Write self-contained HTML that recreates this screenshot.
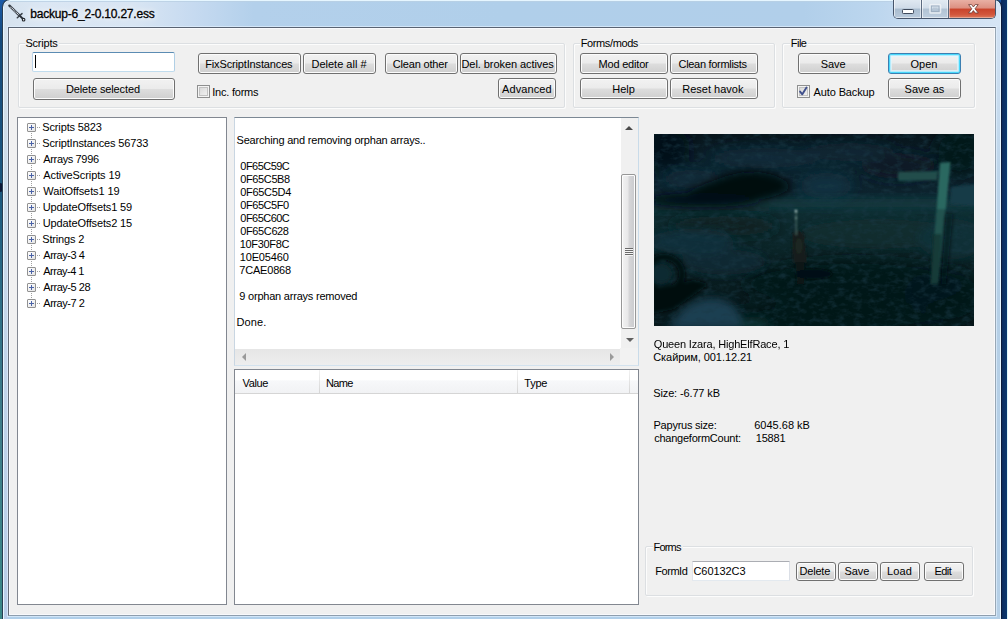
<!DOCTYPE html>
<html>
<head>
<meta charset="utf-8">
<title>backup-6_2-0.10.27.ess</title>
<style>
*{box-sizing:border-box;margin:0;padding:0}
html,body{width:1008px;height:619px;overflow:hidden;background:#0a3a78}
body{font-family:"Liberation Sans",sans-serif;font-size:11px;color:#000;position:relative}
.abs{position:absolute}
.t{position:absolute;white-space:pre;color:#000}
#desk{left:0;top:0;width:1008px;height:619px;background:linear-gradient(180deg,#1a5aa8 0%,#14497c 6%,#174f7e 16%,#1c5a80 32%,#2f7087 50%,#3f7d8a 68%,#3a8888 100%)}
#deskR{left:1001px;top:0;width:7px;height:619px;background:linear-gradient(90deg,#0a2a5a,#0c3a72)}
#deskRw{left:1007px;top:0;width:1px;height:619px;background:#dffafa}
#frame{left:2px;top:-1px;width:1000px;height:640px;border-radius:8px 8px 0 0;border:1px solid #2a3d52;border-right-color:#0c1b3a;
 background:#b0cfea;box-shadow:inset 0 0 0 1px #e6f6ff}
#tglow{left:4px;top:1px;width:996px;height:26px;border-radius:6px 6px 0 0;background:linear-gradient(90deg,#d6e2ee 0px,#dbe7f4 40px,#d8e5f3 130px,#c6daf0 190px,#b3d0eb 250px,#b0cfea 500px,#b1cfea 800px,#bcd6ee 870px,#cfe0f3 940px,#d6e5f5 996px)}
#lstrip{left:4px;top:27px;width:4px;height:592px;background:linear-gradient(180deg,#d6e2ee 0,#d0dde9 15%,#c2d4ea 55%,#b8cde9 100%)}
#rstrip{left:996px;top:27px;width:4px;height:592px;background:linear-gradient(180deg,#d2e2f3 0,#bdd5ea 25%,#b5cfe6 45%,#b5cfe6 100%)}
#frameTop{left:10px;top:1px;width:984px;height:1px;background:#b9cfe3;opacity:.8}
#client{left:8px;top:27px;width:988px;height:589px;background:#f0f0f0;border:1px solid #646a76;border-top-color:#596372;border-right-color:#98a7b4;border-bottom-color:#8e9eae;box-shadow:inset 0 0 0 1px #f8f9fc,0 0 0 1px rgba(225,240,253,.7)}
#caps{left:893px;top:0;width:103px;height:19px;border:1px solid #47556b;border-top:none;border-radius:0 0 5px 5px;overflow:hidden}
#caps div{position:absolute;top:0;height:18px}
#bmin{left:0;width:28px;background:linear-gradient(180deg,#dfe8f1 0%,#cfdbe8 45%,#a9bccf 50%,#b9cadb 100%);border-right:1px solid #5c6b80;box-shadow:inset 1px 0 0 rgba(255,255,255,.6),inset -1px -1px 0 rgba(255,255,255,.5)}
#bmax{left:28px;width:27px;background:linear-gradient(180deg,#e2eaf2 0%,#d3deea 45%,#b1c2d3 50%,#bfcfdf 100%);border-right:1px solid #5c6b80;box-shadow:inset 1px 0 0 rgba(255,255,255,.6),inset -1px -1px 0 rgba(255,255,255,.5)}
#bcls{left:55px;width:47px;background:linear-gradient(180deg,#e8b0a4 0%,#dc8f80 45%,#c9432b 50%,#d2563c 80%,#dd7a5c 100%);box-shadow:inset 1px 0 0 rgba(255,255,255,.45),inset -1px -1px 0 rgba(255,255,255,.35)}
.grp{position:absolute;border:1px solid #dcdfe2;border-radius:2px;box-shadow:inset 1px 1px 0 #fcfcfc,1px 1px 0 #fcfcfc}
.gl{position:absolute;background:#f0f0f0;height:3px}
.btn{position:absolute;border:1px solid #707070;border-radius:3px;
 background:linear-gradient(180deg,#f2f2f2 0%,#ebebeb 48%,#dddddd 52%,#cfcfcf 100%);box-shadow:inset 0 0 0 1px #fcfcfc}
.btn.def{border-color:#3c7fb1;box-shadow:inset 0 0 0 1px #48d8fb,inset 0 0 0 2px #b4ecfd,inset 0 0 0 3px rgba(225,247,254,.7)}
.tb{position:absolute;background:#fff;border:1px solid #abadb3;border-left-color:#e2e3ea;border-right-color:#dbdfe6;border-bottom-color:#e3e9ef;border-radius:1px}
.tb.foc{border-color:#5b8cb3 #b0cfe5 #c0dcee #bcd3e8;border-radius:2px}
.cb{position:absolute;width:13px;height:13px;border:1px solid #8e8f8f;background:linear-gradient(135deg,#d4d4d4 0%,#f6f6f6 100%);box-shadow:inset 0 0 0 1px #f4f4f4,inset 0 0 0 2px #c2c2c2}
.box{position:absolute;background:#fff;border:1px solid #828790}
.pm{position:absolute;width:9px;height:9px;border:1px solid #919191;border-radius:1px;background:linear-gradient(135deg,#fff 0%,#e4e4e4 100%)}
.pm:before{content:"";position:absolute;left:1px;top:3px;width:5px;height:1px;background:#4b63a7}
.pm:after{content:"";position:absolute;left:3px;top:1px;width:1px;height:5px;background:#4b63a7}
#vsb{left:621px;top:118px;width:17px;height:230px;background:#f0f0f0}
#hsb{left:235px;top:349px;width:385px;height:16px;background:linear-gradient(180deg,#e6e6e6,#eeeeee)}
.thumb{position:absolute;left:621px;top:174px;width:15px;height:155px;border:1px solid #979797;border-radius:2px;background:linear-gradient(90deg,#f3f3f3 0%,#e8e8e9 45%,#d6d6d8 55%,#c9cacd 100%);box-shadow:inset 0 0 0 1px #fcfcfc}
.grip{position:absolute;left:625px;top:248px;width:8px;height:8px;background:repeating-linear-gradient(180deg,#6a6a6a 0 1px,#f4f4f4 1px 2px)}
.ar{position:absolute;width:0;height:0}
#lvh{left:235px;top:370px;width:403px;height:24px;background:linear-gradient(180deg,#fff 0%,#fff 45%,#f7f8fa 46%,#f1f2f4 100%);border-bottom:1px solid #d5d5d5}
.cs{position:absolute;top:370px;width:1px;height:23px;background:linear-gradient(180deg,#f2f2f2,#d5d5d5)}
</style>
</head>
<body>
<div id="desk" class="abs"></div>
<div id="deskR" class="abs"></div>
<div id="deskRw" class="abs"></div>
<div class="abs" style="left:0;top:183px;width:3px;height:9px;background:#0a1838;border-radius:0 3px 3px 0"></div>
<div id="frame" class="abs"></div>
<div id="tglow" class="abs"></div><div id="lstrip" class="abs"></div><div id="rstrip" class="abs"></div>
<div id="frameTop" class="abs"></div>
<div id="caps" class="abs"><div id="bmin"></div><div id="bmax"></div><div id="bcls"></div>
<svg style="position:absolute;left:0;top:0" width="103" height="19" viewBox="0 0 103 19">
<rect x="8.5" y="9.5" width="11" height="4" rx=".8" fill="#fff" stroke="#3f4a5c" stroke-width="1"/>
<rect x="36" y="4.5" width="10.5" height="8.5" rx=".8" fill="none" stroke="#eef2f6" stroke-width="1.6" opacity=".85"/>
<rect x="37.4" y="6" width="7.6" height="5.5" fill="none" stroke="#9fb0c2" stroke-width="1"/>
<rect x="39" y="7.6" width="4.4" height="2.3" fill="#b9c7d6"/>
<path d="M74.6 4.6 L77.6 4.6 L79.4 7 L81.2 4.6 L84.2 4.6 L81 8.8 L84.3 13 L81.2 13 L79.4 10.6 L77.6 13 L74.5 13 L77.8 8.8Z" fill="#fff" stroke="#6b3a33" stroke-width=".8" stroke-linejoin="round"/>
</svg></div>
<svg class="abs" style="left:4px;top:2px" width="30" height="24" viewBox="4 2 30 24">
<line x1="9.4" y1="5.7" x2="19.6" y2="15.6" stroke="#343a42" stroke-width="2.4" stroke-linecap="round"/>
<line x1="10.6" y1="6.9" x2="19" y2="15" stroke="#eaf1f9" stroke-width="1.1" stroke-dasharray="1 .8"/>
<line x1="19.4" y1="15.4" x2="23.4" y2="19.4" stroke="#262b32" stroke-width="2" stroke-linecap="round"/>
<line x1="17.3" y1="17.7" x2="22" y2="13.6" stroke="#3a4048" stroke-width="1.5" stroke-linecap="round"/>
<circle cx="23.6" cy="19.7" r="1.3" fill="#fff" stroke="#20252b" stroke-width="1.1"/>
</svg>
<div id="client" class="abs"></div>

<div class="grp" style="left:18px;top:43px;width:547px;height:65px"></div><div class="gl" style="left:25px;top:42px;width:34px"></div>
<div class="grp" style="left:573px;top:43px;width:202px;height:65px"></div><div class="gl" style="left:580px;top:42px;width:60px"></div>
<div class="grp" style="left:782px;top:43px;width:193px;height:65px"></div><div class="gl" style="left:790px;top:42px;width:18px"></div>
<div class="grp" style="left:645px;top:546px;width:328px;height:50px"></div><div class="gl" style="left:653px;top:545px;width:30px"></div>

<div class="tb foc" style="left:32px;top:52px;width:143px;height:20px"></div>
<div class="abs" style="left:35px;top:55px;width:1px;height:13px;background:#000"></div>
<div class="cb" style="left:197px;top:85px"></div>
<div class="cb" style="left:797px;top:85px"></div>
<svg class="abs" style="left:797px;top:85px" width="13" height="13" viewBox="0 0 13 13"><path d="M3.1 6.6 L5.3 9.3 L9.5 2.6" fill="none" stroke="#40508c" stroke-width="1.9" stroke-linecap="round" stroke-linejoin="round"/></svg>
<div class="tb" style="left:692px;top:561px;width:98px;height:20px"></div>
<div class="btn " style="left:33px;top:78px;width:142px;height:22px"></div>
<div class="btn " style="left:198px;top:53px;width:103px;height:21px"></div>
<div class="btn " style="left:303px;top:53px;width:73px;height:21px"></div>
<div class="btn " style="left:385px;top:53px;width:73px;height:21px"></div>
<div class="btn " style="left:460px;top:53px;width:97px;height:21px"></div>
<div class="btn " style="left:498px;top:78px;width:58px;height:21px"></div>
<div class="btn " style="left:580px;top:53px;width:88px;height:21px"></div>
<div class="btn " style="left:670px;top:53px;width:88px;height:21px"></div>
<div class="btn " style="left:580px;top:78px;width:88px;height:21px"></div>
<div class="btn " style="left:670px;top:78px;width:88px;height:21px"></div>
<div class="btn " style="left:798px;top:53px;width:72px;height:21px"></div>
<div class="btn def" style="left:888px;top:53px;width:73px;height:21px"></div>
<div class="btn " style="left:888px;top:78px;width:73px;height:21px"></div>
<div class="btn " style="left:796px;top:562px;width:40px;height:19px"></div>
<div class="btn " style="left:838px;top:562px;width:40px;height:19px"></div>
<div class="btn " style="left:880px;top:562px;width:40px;height:19px"></div>
<div class="btn " style="left:924px;top:562px;width:40px;height:19px"></div>

<div class="box" style="left:17px;top:117px;width:210px;height:488px"></div>
<div class="abs" style="left:31px;top:128px;width:0;height:176px;border-left:1px dotted #a0a0a0"></div>
<div class="pm" style="left:27px;top:123px"></div><div class="abs" style="left:37px;top:127px;width:3px;height:0;border-top:1px dotted #a0a0a0"></div>
<div class="pm" style="left:27px;top:139px"></div><div class="abs" style="left:37px;top:143px;width:3px;height:0;border-top:1px dotted #a0a0a0"></div>
<div class="pm" style="left:27px;top:155px"></div><div class="abs" style="left:37px;top:159px;width:3px;height:0;border-top:1px dotted #a0a0a0"></div>
<div class="pm" style="left:27px;top:171px"></div><div class="abs" style="left:37px;top:175px;width:3px;height:0;border-top:1px dotted #a0a0a0"></div>
<div class="pm" style="left:27px;top:187px"></div><div class="abs" style="left:37px;top:191px;width:3px;height:0;border-top:1px dotted #a0a0a0"></div>
<div class="pm" style="left:27px;top:203px"></div><div class="abs" style="left:37px;top:207px;width:3px;height:0;border-top:1px dotted #a0a0a0"></div>
<div class="pm" style="left:27px;top:219px"></div><div class="abs" style="left:37px;top:223px;width:3px;height:0;border-top:1px dotted #a0a0a0"></div>
<div class="pm" style="left:27px;top:235px"></div><div class="abs" style="left:37px;top:239px;width:3px;height:0;border-top:1px dotted #a0a0a0"></div>
<div class="pm" style="left:27px;top:251px"></div><div class="abs" style="left:37px;top:255px;width:3px;height:0;border-top:1px dotted #a0a0a0"></div>
<div class="pm" style="left:27px;top:267px"></div><div class="abs" style="left:37px;top:271px;width:3px;height:0;border-top:1px dotted #a0a0a0"></div>
<div class="pm" style="left:27px;top:283px"></div><div class="abs" style="left:37px;top:287px;width:3px;height:0;border-top:1px dotted #a0a0a0"></div>
<div class="pm" style="left:27px;top:299px"></div><div class="abs" style="left:37px;top:303px;width:3px;height:0;border-top:1px dotted #a0a0a0"></div>

<div class="box" style="left:234px;top:117px;width:405px;height:249px;border-color:#7c8894 #c9dbe9 #d3e2ee #c9d6e2"></div>
<div id="vsb" class="abs"></div><div id="hsb" class="abs"></div>
<div class="abs" style="left:620px;top:348px;width:18px;height:17px;background:#f2f2f2"></div>
<div class="thumb"></div><div class="grip"></div>
<div class="ar" style="left:625px;top:126px;border-left:4px solid transparent;border-right:4px solid transparent;border-bottom:4px solid #4a4a4a"></div>
<div class="ar" style="left:626px;top:338px;border-left:4px solid transparent;border-right:4px solid transparent;border-top:4px solid #606060"></div>
<div class="ar" style="left:242px;top:353px;border-top:4px solid transparent;border-bottom:4px solid transparent;border-right:4px solid #9a9a9a"></div>
<div class="ar" style="left:610px;top:353px;border-top:4px solid transparent;border-bottom:4px solid transparent;border-left:4px solid #9a9a9a"></div>

<div class="box" style="left:234px;top:369px;width:405px;height:236px"></div>
<div id="lvh" class="abs"></div>
<div class="cs" style="left:319px"></div><div class="cs" style="left:517px"></div><div class="cs" style="left:629px"></div>

<svg class="abs" id="pic" style="left:654px;top:134px" width="320" height="192" viewBox="0 0 320 192">
<defs>
<linearGradient id="pbg" x1="0" y1="0" x2="0" y2="1">
<stop offset="0" stop-color="#07141b"/><stop offset=".1" stop-color="#0a1e28"/><stop offset=".3" stop-color="#0c232e"/>
<stop offset=".37" stop-color="#0f3036"/><stop offset=".45" stop-color="#0d2a2e"/><stop offset=".6" stop-color="#0b2528"/>
<stop offset=".8" stop-color="#081c1f"/><stop offset="1" stop-color="#07181c"/>
</linearGradient>
<filter id="b2" x="-20%" y="-20%" width="140%" height="140%"><feGaussianBlur stdDeviation="2"/></filter>
<filter id="b1" x="-20%" y="-20%" width="140%" height="140%"><feGaussianBlur stdDeviation="1.1"/></filter>
<filter id="b4" x="-30%" y="-30%" width="160%" height="160%"><feGaussianBlur stdDeviation="4"/></filter>
<filter id="b7" x="-40%" y="-40%" width="180%" height="180%"><feGaussianBlur stdDeviation="7"/></filter>
<filter id="nzd" x="0" y="0" width="100%" height="100%"><feTurbulence type="fractalNoise" baseFrequency=".12 .2" numOctaves="3" seed="11"/><feColorMatrix type="matrix" values="0 0 0 0 .01  0 0 0 0 .04  0 0 0 0 .06  0 0 0 1.4 -.62"/></filter>
<clipPath id="pc"><rect width="320" height="192"/></clipPath>
</defs>
<g clip-path="url(#pc)">
<rect width="320" height="192" fill="url(#pbg)"/>
<g filter="url(#b7)">
<ellipse cx="110" cy="24" rx="55" ry="10" fill="#133447" opacity=".55"/>
<ellipse cx="195" cy="18" rx="45" ry="9" fill="#113044" opacity=".5"/>
<ellipse cx="38" cy="45" rx="30" ry="9" fill="#133342" opacity=".6"/>
<ellipse cx="172" cy="52" rx="26" ry="13" fill="#143648" opacity=".7"/>
<ellipse cx="12" cy="15" rx="24" ry="22" fill="#050f15" opacity=".9"/>
<ellipse cx="245" cy="32" rx="38" ry="13" fill="#091b25" opacity=".9"/>
<ellipse cx="305" cy="18" rx="25" ry="24" fill="#07141b" opacity=".9"/>
</g>
<g filter="url(#b4)">
<rect x="85" y="65" width="245" height="8" fill="#174045" opacity=".5"/>
<rect x="-5" y="70" width="120" height="7" fill="#0f2e31" opacity=".7"/>
<ellipse cx="225" cy="100" rx="80" ry="15" fill="#113233" opacity=".5"/>
<ellipse cx="298" cy="105" rx="34" ry="20" fill="#11333c" opacity=".7"/>
</g>
<g filter="url(#b7)">
<ellipse cx="200" cy="150" rx="110" ry="25" fill="#061518" opacity=".9"/>
<ellipse cx="170" cy="185" rx="120" ry="14" fill="#06171a" opacity=".9"/>
<ellipse cx="70" cy="92" rx="55" ry="10" fill="#0a2022" opacity=".8"/>
<ellipse cx="290" cy="162" rx="40" ry="28" fill="#07181b" opacity=".9"/>
</g>
<g filter="url(#b4)">
<ellipse cx="38" cy="108" rx="42" ry="13" fill="#123544" opacity=".7"/>
<ellipse cx="70" cy="128" rx="42" ry="13" fill="#0f2f3d" opacity=".6"/>
<path d="M18 190 Q30 166 58 164 Q80 166 86 180 L90 195 L10 195Z" fill="#1c4358" opacity=".9"/>
<ellipse cx="100" cy="190" rx="16" ry="5" fill="#1a4444" opacity=".7"/>
</g>
<rect width="320" height="192" filter="url(#nzd)"/>
<g filter="url(#b4)">
<path d="M20 68 Q40 52 64 45 Q92 33 116 40 Q132 44 137 54 Q122 65 95 67 Q55 74 20 68Z" fill="#03090d"/>
<ellipse cx="50" cy="66" rx="55" ry="7" fill="#050f15"/>
<ellipse cx="95" cy="52" rx="30" ry="9" fill="#02070a"/>
</g>
<g filter="url(#b2)">
<ellipse cx="10" cy="140" rx="18" ry="17" fill="none" stroke="#040d10" stroke-width="6"/>
<ellipse cx="8" cy="140" rx="10" ry="10" fill="#0c2a33"/>
<path d="M-2 155 L40 146 L55 150 L20 175 L-2 180Z" fill="#040e11"/>
</g>
<g filter="url(#b1)">
<path d="M286 29 L296.5 28 L284 150 L276.5 150Z" fill="#205250"/>
<path d="M286 29 L296.5 28 L292 75 L283 75Z" fill="#35786d" opacity=".55"/>
<path d="M278 100 L287.5 100 L284 150 L276.5 150Z" fill="#10302f" opacity=".7"/>
<path d="M245 38 Q242 42 245 47 L283 46 L284 37Z" fill="#204d4c"/>
<path d="M297 53 L322 50 L322 72 L296 70Z" fill="#153b46"/>
</g>
<g filter="url(#b2)"><path d="M292 80 L299 80 L292 150 L287 150Z" fill="#050f12" opacity=".6"/></g>
<g filter="url(#b1)">
<path d="M138 100 Q144 93 150 100 L153 128 Q146 134 139 128Z" fill="#131e1c"/>
<ellipse cx="145" cy="112" rx="3.5" ry="8" fill="#283026" opacity=".45"/>
<path d="M141 128 L151 128 L150 150 L143 150Z" fill="#071316"/>
<ellipse cx="160" cy="140" rx="18" ry="5" fill="#050f12"/>
<rect x="141.5" y="77" width="1.4" height="24" fill="#5f7f78" opacity=".7"/>
<circle cx="142" cy="77" r="1.2" fill="#cfe6e0"/>
<circle cx="142" cy="84" r=".9" fill="#95b5ae"/>
</g>
</g>
</svg>

<span class="t" style="left:30.20px;top:7px;font-size:12px;line-height:14px;letter-spacing:-0.200px;text-shadow:0 0 5px #fff,0 0 8px #fff;-webkit-text-stroke:.3px #000">backup-6_2-0.10.27.ess</span>
<span class="t" style="left:25.50px;top:37px;font-size:11px;line-height:13px;letter-spacing:-0.233px;">Scripts</span>
<span class="t" style="left:66.00px;top:83px;font-size:11px;line-height:13px;letter-spacing:-0.129px;">Delete selected</span>
<span class="t" style="left:205.25px;top:58px;font-size:11px;line-height:13px;letter-spacing:-0.147px;">FixScriptInstances</span>
<span class="t" style="left:311.50px;top:58px;font-size:11px;line-height:13px;letter-spacing:0.000px;">Delete all #</span>
<span class="t" style="left:392.75px;top:58px;font-size:11px;line-height:13px;letter-spacing:-0.175px;">Clean other</span>
<span class="t" style="left:461.50px;top:58px;font-size:11px;line-height:13px;letter-spacing:-0.069px;">Del. broken actives</span>
<span class="t" style="left:502.00px;top:83px;font-size:11px;line-height:13px;letter-spacing:0.107px;">Advanced</span>
<span class="t" style="left:212.25px;top:86px;font-size:11px;line-height:13px;letter-spacing:-0.222px;">Inc. forms</span>
<span class="t" style="left:580.75px;top:37px;font-size:11px;line-height:13px;letter-spacing:-0.389px;">Forms/mods</span>
<span class="t" style="left:598.50px;top:58px;font-size:11px;line-height:13px;letter-spacing:-0.194px;">Mod editor</span>
<span class="t" style="left:678.50px;top:58px;font-size:11px;line-height:13px;letter-spacing:-0.304px;">Clean formlists</span>
<span class="t" style="left:612.25px;top:83px;font-size:11px;line-height:13px;letter-spacing:0.000px;">Help</span>
<span class="t" style="left:682.25px;top:83px;font-size:11px;line-height:13px;letter-spacing:0.000px;">Reset havok</span>
<span class="t" style="left:790.75px;top:37px;font-size:11px;line-height:13px;letter-spacing:-0.500px;">File</span>
<span class="t" style="left:820.70px;top:58px;font-size:11px;line-height:13px;letter-spacing:-0.067px;">Save</span>
<span class="t" style="left:910.60px;top:58px;font-size:11px;line-height:13px;letter-spacing:-0.033px;">Open</span>
<span class="t" style="left:904.60px;top:83px;font-size:11px;line-height:13px;letter-spacing:-0.017px;">Save as</span>
<span class="t" style="left:813.60px;top:86px;font-size:11px;line-height:13px;letter-spacing:-0.130px;">Auto Backup</span>
<span class="t" style="left:42.30px;top:121px;font-size:11px;line-height:13px;letter-spacing:-0.145px;">Scripts 5823</span>
<span class="t" style="left:42.30px;top:137px;font-size:11px;line-height:13px;letter-spacing:-0.140px;">ScriptInstances 56733</span>
<span class="t" style="left:43.30px;top:153px;font-size:11px;line-height:13px;letter-spacing:-0.360px;">Arrays 7996</span>
<span class="t" style="left:43.30px;top:169px;font-size:11px;line-height:13px;letter-spacing:-0.107px;">ActiveScripts 19</span>
<span class="t" style="left:43.30px;top:185px;font-size:11px;line-height:13px;letter-spacing:-0.093px;">WaitOffsets1 19</span>
<span class="t" style="left:42.80px;top:201px;font-size:11px;line-height:13px;letter-spacing:-0.131px;">UpdateOffsets1 59</span>
<span class="t" style="left:42.80px;top:217px;font-size:11px;line-height:13px;letter-spacing:-0.131px;">UpdateOffsets2 15</span>
<span class="t" style="left:42.30px;top:233px;font-size:11px;line-height:13px;letter-spacing:-0.175px;">Strings 2</span>
<span class="t" style="left:43.30px;top:249px;font-size:11px;line-height:13px;letter-spacing:-0.463px;">Array-3 4</span>
<span class="t" style="left:43.30px;top:265px;font-size:11px;line-height:13px;letter-spacing:-0.512px;">Array-4 1</span>
<span class="t" style="left:43.30px;top:281px;font-size:11px;line-height:13px;letter-spacing:-0.444px;">Array-5 28</span>
<span class="t" style="left:43.30px;top:297px;font-size:11px;line-height:13px;letter-spacing:-0.463px;">Array-7 2</span>
<span class="t" style="left:236.50px;top:134px;font-size:11px;line-height:13px;letter-spacing:-0.192px;">Searching and removing orphan arrays..</span>
<span class="t" style="left:240.30px;top:160px;font-size:11px;line-height:13px;letter-spacing:-0.529px;">0F65C59C</span>
<span class="t" style="left:240.30px;top:173px;font-size:11px;line-height:13px;letter-spacing:-0.386px;">0F65C5B8</span>
<span class="t" style="left:240.30px;top:186px;font-size:11px;line-height:13px;letter-spacing:-0.314px;">0F65C5D4</span>
<span class="t" style="left:240.30px;top:199px;font-size:11px;line-height:13px;letter-spacing:-0.457px;">0F65C5F0</span>
<span class="t" style="left:240.30px;top:212px;font-size:11px;line-height:13px;letter-spacing:-0.529px;">0F65C60C</span>
<span class="t" style="left:240.30px;top:225px;font-size:11px;line-height:13px;letter-spacing:-0.386px;">0F65C628</span>
<span class="t" style="left:239.80px;top:238px;font-size:11px;line-height:13px;letter-spacing:-0.343px;">10F30F8C</span>
<span class="t" style="left:239.80px;top:251px;font-size:11px;line-height:13px;letter-spacing:-0.171px;">10E05460</span>
<span class="t" style="left:239.30px;top:264px;font-size:11px;line-height:13px;letter-spacing:-0.200px;">7CAE0868</span>
<span class="t" style="left:239.30px;top:290px;font-size:11px;line-height:13px;letter-spacing:-0.214px;">9 orphan arrays removed</span>
<span class="t" style="left:236.40px;top:316px;font-size:11px;line-height:13px;letter-spacing:0.150px;">Done.</span>
<span class="t" style="left:242.50px;top:377px;font-size:11px;line-height:13px;letter-spacing:-0.375px;">Value</span>
<span class="t" style="left:326.00px;top:377px;font-size:11px;line-height:13px;letter-spacing:-0.667px;">Name</span>
<span class="t" style="left:524.30px;top:377px;font-size:11px;line-height:13px;letter-spacing:-0.267px;">Type</span>
<span class="t" style="left:653.75px;top:338px;font-size:11px;line-height:13px;letter-spacing:-0.173px;">Queen Izara, HighElfRace, 1</span>
<span class="t" style="left:653.25px;top:351px;font-size:11px;line-height:13px;letter-spacing:-0.074px;">Скайрим, 001.12.21</span>
<span class="t" style="left:653.25px;top:387px;font-size:11px;line-height:13px;letter-spacing:-0.135px;">Size: -6.77 kB</span>
<span class="t" style="left:653.50px;top:419px;font-size:11px;line-height:13px;letter-spacing:-0.229px;">Papyrus size:</span>
<span class="t" style="left:754.25px;top:419px;font-size:11px;line-height:13px;letter-spacing:0.000px;">6045.68 kB</span>
<span class="t" style="left:654.25px;top:432px;font-size:11px;line-height:13px;letter-spacing:-0.250px;">changeformCount:</span>
<span class="t" style="left:755.75px;top:432px;font-size:11px;line-height:13px;letter-spacing:-0.188px;">15881</span>
<span class="t" style="left:653.50px;top:541px;font-size:11px;line-height:13px;letter-spacing:-0.812px;">Forms</span>
<span class="t" style="left:655.25px;top:565px;font-size:11px;line-height:13px;letter-spacing:-0.450px;">FormId</span>
<span class="t" style="left:693.50px;top:565px;font-size:11px;line-height:13px;letter-spacing:-0.071px;">C60132C3</span>
<span class="t" style="left:799.50px;top:565px;font-size:11px;line-height:13px;letter-spacing:-0.200px;">Delete</span>
<span class="t" style="left:844.50px;top:565px;font-size:11px;line-height:13px;letter-spacing:-0.083px;">Save</span>
<span class="t" style="left:887.00px;top:565px;font-size:11px;line-height:13px;letter-spacing:0.167px;">Load</span>
<span class="t" style="left:934.50px;top:565px;font-size:11px;line-height:13px;letter-spacing:-0.583px;">Edit</span>
</body>
</html>
